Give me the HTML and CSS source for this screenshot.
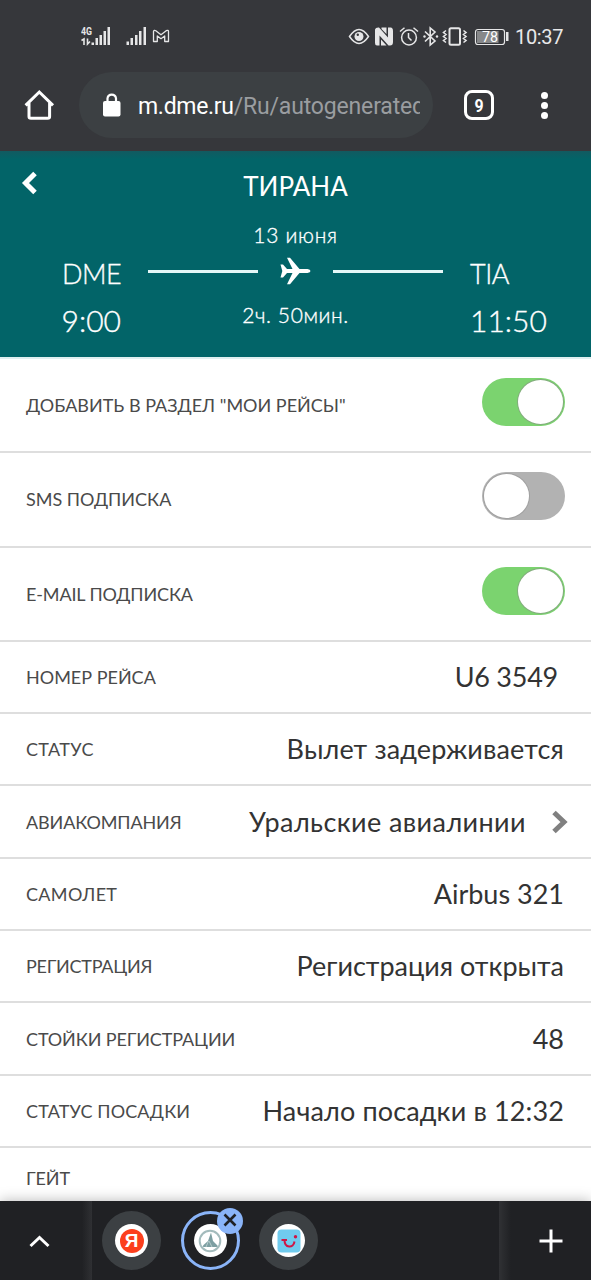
FILE: index.html
```html
<!DOCTYPE html>
<html lang="ru">
<head>
<meta charset="utf-8">
<meta name="viewport" content="width=device-width">
<title>Тирана</title>
<link rel="stylesheet" href="styles.css">
</head>
<body>
<div class="screen">
  <header class="browser">
    <div class="status">
      <svg class="signals" width="92" height="22" viewBox="0 0 92 22">
        <text class="net" x="0" y="9" textLength="11" lengthAdjust="spacingAndGlyphs">4G</text>
        <path d="M0.5 14.500L3 13V19M6.500 12.500V18L9 15.500" fill="none" stroke="#e6e6e7" stroke-width="1.600"/>
        <g fill="#e6e6e7">
          <rect x="10.500" y="16.500" width="2.500" height="2.500"/><rect x="14.500" y="12" width="2.500" height="7"/><rect x="18.500" y="9" width="2.500" height="10"/><rect x="22.500" y="5" width="2.500" height="14"/><rect x="26.500" y="1" width="2.500" height="18"/>
          <rect x="45.500" y="15.500" width="2.500" height="3.500"/><rect x="49.500" y="12" width="2.500" height="7"/><rect x="54" y="9" width="2.500" height="10"/><rect x="58" y="5" width="2.500" height="14"/><rect x="62.500" y="1" width="2.500" height="18"/>
        </g>
        <path d="M72.500 15.500V5.500Q73 3.700 74.800 4.700L80 8.800L85.200 4.700Q87.500 3.700 87.500 5.500V15.500H83.700V10L80 12.700L76.300 10V15.500Z" fill="none" stroke="#e6e6e7" stroke-width="1.300" stroke-linejoin="round"/>
      </svg>
      <svg class="system" width="162" height="22" viewBox="0 0 162 22" fill="none" stroke="#e6e6e7" stroke-width="1.500">
        <path d="M1.500 10.500Q11-3.500 20.500 10.500Q11 24.500 1.500 10.500Z"/>
        <circle cx="11" cy="10.500" r="4.500" fill="#e6e6e7" stroke="none"/><circle cx="9.800" cy="8.800" r="1.200" fill="#36373a" stroke="none"/>
        <path d="M27 3.500Q27.500 1.200 31 1.500L40 11.500V1.500H42Q45 1 45 5V16Q45 19.500 42 19.500H40.500L31.500 9.500V19.500H29Q27 19.500 27 17Z" fill="#e6e6e7" stroke="none"/>
        <path d="M33.500 1.500H38.500V8L33.500 3ZM33 13.500L38.500 19.500H33Z" fill="#e6e6e7" stroke="none"/>
        <circle cx="61" cy="11.500" r="7.400"/><path d="M60.500 7V11.500L63.500 14.500M52 5.500L56.500 1.700M70 5.500L65.500 1.700"/>
        <path d="M77 5.500L87 15L82.200 19V2L87 6L77 15.500" stroke-width="1.600"/><circle cx="76.500" cy="10.500" r="1.200" fill="#e6e6e7" stroke="none"/><circle cx="89" cy="10.500" r="1.200" fill="#e6e6e7" stroke="none"/>
        <rect x="101.500" y="2.200" width="10.500" height="16.500" rx="1.500" stroke-width="2"/>
        <path d="M98 4.500L95.500 6.500L98 8.500L95.500 10.500L98 12.500L95.500 14.500L98 16.500M115.500 4.500L118 6.500L115.500 8.500L118 10.500L115.500 12.500L118 14.500L115.500 16.500" stroke-width="1.600"/>
        <rect x="127.500" y="3.500" width="29" height="15" rx="2.500" stroke-width="1.200"/><rect x="129" y="5" width="21.500" height="12" fill="#87888a" stroke="none"/>
        <rect x="158" y="6" width="2.500" height="9" fill="#e6e6e7" stroke="none"/>
        <text class="charge" x="134" y="16" textLength="16" lengthAdjust="spacingAndGlyphs">78</text>
      </svg>
      <span class="clock">10:37</span>
    </div>
    <div class="toolbar">
      <svg class="home" width="32" height="32" viewBox="0 0 32 32" fill="none" stroke="#fff" stroke-width="3"><path d="M2.600 16.300L16.300 3L30 16.300M6 14V27.500Q6 29.300 8 29.300H24.600Q26.600 29.300 26.600 27.500V14"/></svg>
      <div class="omnibox">
        <svg width="18" height="24" viewBox="0 0 18 24"><rect x="0" y="8" width="17.500" height="15.500" rx="2" fill="#fff"/><path d="M4.500 9V5.300A4.300 4.300 0 0 1 13 5.300V9" fill="none" stroke="#fff" stroke-width="2.200"/></svg>
        <span class="url"><b>m.dme.ru</b>/Ru/autogenerated</span>
      </div>
      <span class="tabcount"><span class="num">9</span></span>
      <span class="more"><i></i><i></i><i></i></span>
    </div>
  </header>

  <section class="flight">
    <div class="titlebar">
      <svg width="16" height="24" viewBox="0 0 16 24"><path d="M14 2.500L4.500 12L14 21.500" fill="none" stroke="#fff" stroke-width="5"/></svg>
      <h1>ТИРАНА</h1>
    </div>
    <div class="route">
      <div class="port from"><span class="code dme">DME</span><span class="time">9:00</span></div>
      <div class="path">
        <span class="small date">13 июня</span>
        <div class="track"><i></i>
          <svg width="32" height="28" viewBox="0 0 32 28"><path fill="#fff" d="M.5 7.500H3L7 12H12.500L7 .8H10L19.500 12H27.500Q30.500 12.300 30.500 14Q30.500 15.700 27.500 16H19.500L10 27.200H7L12.500 16H7L3 20.500H.5L2.300 14Z"/></svg>
        <i></i></div>
        <span class="small duration">2ч. 50мин.</span>
      </div>
      <div class="port to"><span class="code tia">TIA</span><span class="time">11:50</span></div>
    </div>
  </section>

  <main class="rows">
    <div class="row tall"><span class="label">ДОБАВИТЬ В РАЗДЕЛ "МОИ РЕЙСЫ"</span><span class="switch on"></span></div>
    <div class="row tall"><span class="label">SMS ПОДПИСКА</span><span class="switch"></span></div>
    <div class="row tall"><span class="label snug">E-MAIL ПОДПИСКА</span><span class="switch on"></span></div>
    <div class="row"><span class="label">НОМЕР РЕЙСА</span><span class="value number">U6 3549</span></div>
    <div class="row"><span class="label wide">СТАТУС</span><span class="value airy">Вылет задерживается</span></div>
    <div class="row"><span class="label snug">АВИАКОМПАНИЯ</span><span class="value airline">Уральские авиалинии</span><svg class="go" width="16" height="24" viewBox="0 0 16 24"><path d="M2 2.500L12 12L2 21.500" fill="none" stroke="#808080" stroke-width="5"/></svg></div>
    <div class="row"><span class="label wide">САМОЛЕТ</span><span class="value">Airbus 321</span></div>
    <div class="row"><span class="label tight">РЕГИСТРАЦИЯ</span><span class="value">Регистрация открыта</span></div>
    <div class="row"><span class="label snug">СТОЙКИ РЕГИСТРАЦИИ</span><span class="value">48</span></div>
    <div class="row"><span class="label airy">СТАТУС ПОСАДКИ</span><span class="value airy">Начало посадки в 12:32</span></div>
    <div class="row last"><span class="label snug">ГЕЙТ</span></div>
  </main>

  <nav class="tabs">
    <div class="expand"><svg width="22" height="16" viewBox="0 0 22 16"><path d="M2.500 13L11.500 4.500L20.500 13" fill="none" stroke="#fff" stroke-width="3"/></svg></div>
    <div class="strip">
      <span class="tab"><span class="fav"><span class="ya">Я</span></span></span>
      <span class="tab active"><span class="fav"><svg width="24" height="24" viewBox="0 0 24 24"><circle cx="12" cy="12" r="10.300" fill="none" stroke="#a3bbbc" stroke-width="2"/><path d="M13 3.500L15 12L19.500 16.500Q20 18 18.500 18H5.500Q4 17.500 5.500 16L10 12Z" fill="#7d9fa2"/><path d="M10.500 12L8 18M11 12L14 18" stroke="#c4d5d6" stroke-width=".8" fill="none"/></svg></span>
        <span class="close"><svg width="26" height="26" viewBox="0 0 26 26"><path d="M7.500 6.500L18.500 17.500M18.500 6.500L7.500 17.500" stroke="#202124" stroke-width="2.600"/></svg></span></span>
      <span class="tab"><span class="fav"><svg width="24" height="24" viewBox="0 0 24 24"><rect x=".5" y=".5" width="23" height="23" rx="4" fill="#70cbee"/><path d="M4.500 11H10M7.500 11C7.500 19.500 16.500 19.500 17.500 12.500" fill="none" stroke="#cf1645" stroke-width="2"/><circle cx="18.500" cy="7.800" r="1.700" fill="#cf1645"/></svg></span></span>
    </div>
    <div class="add"><svg width="24" height="24" viewBox="0 0 24 24"><path d="M12 .5V23.500M.5 12H23.500" stroke="#fff" stroke-width="3"/></svg></div>
  </nav>
</div>
</body>
</html>
```
FILE: styles.css
```css
* { box-sizing: border-box; }
body { margin: 0; background: #fff; font-family: Lato, "Liberation Sans", sans-serif; }
.screen { width: 591px; height: 1280px; display: flex; flex-direction: column; overflow: hidden; }
svg { display: block; flex: none; }
span { white-space: nowrap; }

.browser { height: 151px; flex: none; background: #36373b; color: #fff; font-family: Roboto, sans-serif; }
.status { height: 56px; padding: 26px 26px 0 81px; display: flex; align-items: flex-start; }
.net { font: bold 10px Roboto, sans-serif; fill: #e6e6e7; }
.charge { font: 14px Roboto, sans-serif; fill: #fff; stroke: none; }
.system { margin-left: 175px; }
.clock { margin-left: 5px; font-size: 20px; line-height: 22px; letter-spacing: -.35px; color: #e8e8e9; }
.toolbar { display: flex; align-items: center; height: 98px; padding-left: 23px; }
.omnibox { margin-left: 24px; width: 354px; height: 66px; border-radius: 33px; background: #3c4043; display: flex; align-items: center; padding-left: 24px; }
.url { margin: 4px 0 0 17px; width: 282px; overflow: hidden; font-size: 23px; letter-spacing: -.17px; line-height: 30px; color: #9a9da0; }
.url b { font-weight: 400; letter-spacing: -.3px; color: #fff; }
.tabcount { margin-left: 31px; width: 30px; height: 30px; border: 3px solid #fff; border-radius: 8px; display: grid; place-items: center; font-size: 18px; font-weight: 700; }
.num { transform: scaleX(.88); }
.more { margin-left: 47px; display: flex; flex-direction: column; gap: 3px; }
.more i { width: 7px; height: 7px; border-radius: 50%; background: #fff; }

.flight { height: 206px; flex: none; background: linear-gradient(#125a60, #026468 8px); color: #fff; }
.titlebar { height: 68px; padding: 0 0 5px 21px; display: flex; align-items: center; }
h1 { margin: 7px 0 0; width: 517px; text-align: center; font-size: 26px; font-weight: 400; line-height: 32px; }
.route { display: grid; grid-template-columns: 148px 295px 148px; height: 138px; }
.port { display: flex; flex-direction: column; padding-top: 39px; -webkit-text-stroke: .35px #fff; }
.from { align-items: flex-end; padding-right: 27px; }
.to { padding-left: 27px; }
.code { font-size: 27px; line-height: 32px; font-weight: 300; }
.dme { letter-spacing: -.6px; }
.tia { letter-spacing: -.5px; }
.time { font-size: 30px; line-height: 36px; margin-top: 12px; font-weight: 300; }
.path { display: flex; flex-direction: column; align-items: center; }
.small { font-size: 21px; line-height: 26px; margin-top: 3px; font-weight: 300; -webkit-text-stroke: .35px #fff; }
.date { letter-spacing: .7px; }
.duration { letter-spacing: .6px; }
.track { width: 295px; height: 28px; margin-top: 9px; display: flex; align-items: center; justify-content: space-between; }
.track i { width: 110px; height: 3px; background: #e5f7f7; }
.track + .small { margin-top: 17px; }

.rows { flex: 1; min-height: 0; border-top: 2px solid #dfeff0; overflow: hidden; background: #fff; }
.row { height: 72.300px; padding: 0 27px 0 26px; display: flex; align-items: center; border-bottom: 2px solid #dedede; }
.row.tall { height: 94.300px; }
.label { flex: 1; font-size: 18px; line-height: 24px; color: #4a4a4a; }
.value { font-size: 27px; line-height: 34px; color: #333; }
.snug { letter-spacing: -.13px; }
.tight { letter-spacing: -.27px; }
.wide { letter-spacing: .33px; }
.airy { letter-spacing: .13px; }
.number { letter-spacing: -.25px; margin-right: 6px; }
.airline { letter-spacing: .4px; }
.go { margin: 0 -4px 0 26px; }
.switch { width: 83px; height: 48px; margin: -6px -1px 0 0; border-radius: 24px; background: #b2b2b2; padding: 2px; display: flex; }
.switch::before { content: ""; width: 45px; height: 44px; border-radius: 50%; background: #fff; box-shadow: 0 0 0 1px #a0a0a0; }
.switch.on { background: #7bd36f; justify-content: flex-end; }
.switch.on::before { box-shadow: 0 0 0 1px #83ad7d; }
.row.last { height: 60px; border: 0; }

.tabs { height: 79px; flex: none; background: #202124; display: flex; box-shadow: 0 -1px 12px rgba(0,0,0,.25); z-index: 1; }
.expand { width: 92px; padding-left: 28px; display: flex; align-items: center; background: linear-gradient(90deg, #202124 82px, #2f3033 92px); }
.strip { width: 407px; padding: 10px 0 0 10px; display: flex; gap: 19.600px; }
.tab { position: relative; width: 59px; height: 59px; border-radius: 50%; background: #3c4043; display: grid; place-items: center; }
.tab.active { background: none; border: 3px solid #8ab4f8; }
.fav { width: 33px; height: 33px; border-radius: 50%; background: #fff; display: grid; place-items: center; }
.ya { width: 24px; height: 24px; border-radius: 50%; background: #fc3f1d; color: #fff; text-align: center; font: 700 19px/24px "Liberation Sans", sans-serif; }
.close { position: absolute; right: -6px; top: -6px; width: 26px; height: 26px; border-radius: 50%; background: #8ab4f8; }
.add { flex: 1; padding-left: 40px; display: flex; align-items: center; background: linear-gradient(90deg, #303134, #202124 12px); }
```
